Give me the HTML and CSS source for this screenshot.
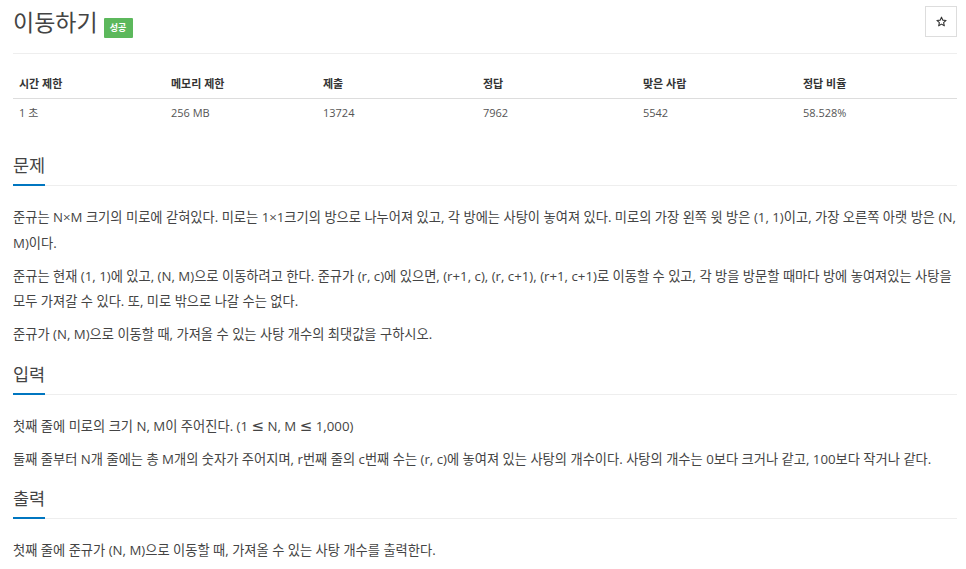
FILE: index.html
```html
<!DOCTYPE html>
<html lang="ko">
<head>
<meta charset="utf-8">
<title>이동하기</title>
<link rel="stylesheet" href="styles.css">
</head>
<body>
<div class="page">
  <div class="page-header">
    <h1 class="title">이동하기 <span class="badge">성공</span></h1>
    <button class="star-btn" type="button" aria-label="즐겨찾기">
      <svg width="11" height="11" viewBox="0 0 24 24"><path d="M12 2.5l2.9 6.6 7.1.6-5.4 4.7 1.6 7-6.2-3.7-6.2 3.7 1.6-7L2 9.7l7.1-.6z" fill="none" stroke="#333" stroke-width="2.4" stroke-linejoin="round"/></svg>
    </button>
  </div>

  <table class="info">
    <thead>
      <tr>
        <th class="c1">시간 제한</th>
        <th class="c1">메모리 제한</th>
        <th class="c2">제출</th>
        <th class="c2">정답</th>
        <th class="c2">맞은 사람</th>
        <th>정답 비율</th>
      </tr>
    </thead>
    <tbody>
      <tr>
        <td>1 초</td>
        <td>256 MB</td>
        <td>13724</td>
        <td>7962</td>
        <td>5542</td>
        <td>58.528%</td>
      </tr>
    </tbody>
  </table>

  <section class="section first">
    <div class="headline"><h2>문제</h2></div>
    <p>준규는 N×M 크기의 미로에 갇혀있다. 미로는 1×1크기의 방으로 나누어져 있고, 각 방에는 사탕이 놓여져 있다. 미로의 가장 왼쪽 윗 방은 (1, 1)이고, 가장 오른쪽 아랫 방은 (N, M)이다.</p>
    <p>준규는 현재 (1, 1)에 있고, (N, M)으로 이동하려고 한다. 준규가 (r, c)에 있으면, (r+1, c), (r, c+1), (r+1, c+1)로 이동할 수 있고, 각 방을 방문할 때마다 방에 놓여져있는 사탕을 모두 가져갈 수 있다. 또, 미로 밖으로 나갈 수는 없다.</p>
    <p>준규가 (N, M)으로 이동할 때, 가져올 수 있는 사탕 개수의 최댓값을 구하시오.</p>
  </section>

  <section class="section">
    <div class="headline"><h2>입력</h2></div>
    <p>첫째 줄에 미로의 크기 N, M이 주어진다. (1 <span class="math">≤</span> N, M <span class="math">≤</span> 1,000)</p>
    <p>둘째 줄부터 N개 줄에는 총 M개의 숫자가 주어지며, r번째 줄의 c번째 수는 (r, c)에 놓여져 있는 사탕의 개수이다. 사탕의 개수는 0보다 크거나 같고, 100보다 작거나 같다.</p>
  </section>

  <section class="section">
    <div class="headline"><h2>출력</h2></div>
    <p>첫째 줄에 준규가 (N, M)으로 이동할 때, 가져올 수 있는 사탕 개수를 출력한다.</p>
  </section>
</div>
</body>
</html>
```

FILE: styles.css
```css
html, body {
  margin: 0;
  padding: 0;
  background: #fff;
}

body {
  font-family: "Open Sans", "Noto Sans CJK KR", sans-serif;
  color: #333;
}

.page {
  padding: 0 9px 0 13px;
}

.page-header {
  display: flex;
  justify-content: space-between;
  align-items: flex-start;
  padding-top: 6px;
  padding-bottom: 14px;
  border-bottom: 1px solid #eee;
}

.title {
  margin: 0;
  font-size: 23px;
  font-weight: 400;
  line-height: 33px;
  color: #444;
}

.badge {
  display: inline-block;
  vertical-align: 0;
  margin-left: 0;
  width: 29px;
  height: 20px;
  line-height: 20px;
  text-align: center;
  font-size: 9px;
  font-weight: 700;
  color: #fff;
  background: #5cb85c;
  border-radius: 1px;
}

.star-btn {
  width: 32px;
  height: 31px;
  padding: 0;
  display: flex;
  align-items: center;
  justify-content: center;
  background: #fff;
  border: 1px solid #ddd;
  border-radius: 0;
}

.info {
  width: 100%;
  margin-top: 14px;
  border-collapse: collapse;
  font-size: 11px;
  color: #333;
}

.info th, .info td {
  text-align: left;
  padding: 0 6px;
  line-height: 15px;
}

.info th {
  font-weight: 700;
  padding-top: 8px;
  padding-bottom: 7px;
  border-bottom: 1px solid #ddd;
}

.info td {
  padding-top: 6px;
  padding-bottom: 6px;
  color: #555;
}

.info .c1 { width: 140px; }
.info .c2 { width: 148px; }

.section {
  margin-top: 15px;
}

.section.first {
  margin-top: 28px;
}

.headline {
  display: flex;
  border-bottom: 1px solid #eee;
  margin-bottom: 19px;
}

.headline h2 {
  margin: 0 0 -1px 0;
  font-size: 17.5px;
  font-weight: 400;
  line-height: 22px;
  padding-bottom: 8px;
  border-bottom: 2px solid #0076c0;
  color: #444;
}

.section p {
  margin: 0 0 7.5px 0;
  font-size: 13.25px;
  line-height: 25.5px;
  color: #444;
}

.math {
  font-family: "DejaVu Sans", sans-serif;
  font-size: 15px;
  line-height: 1;
}
```
